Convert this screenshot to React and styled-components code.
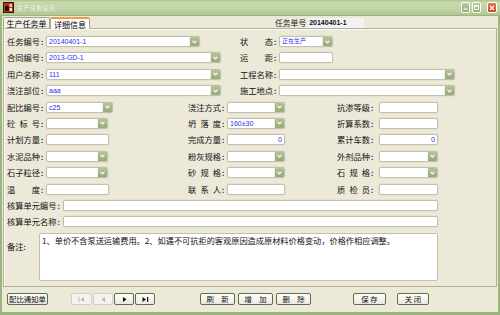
import React from 'react';
import styled, { createGlobalStyle } from 'styled-components';

const GlobalStyle = createGlobalStyle`
  html, body {
    margin: 0;
    padding: 0;
    background: #ffffff;
  }
  body {
    font-family: "Noto Sans CJK SC", "Noto Sans", sans-serif;
  }
`;

export default function App() {
  return (
    <>
      <GlobalStyle />
      <Window>
        <TitleBar>
          <AppIcon />
          <Title>生产任务设定</Title>
          <Controls>
            <CtrlButton>
              <svg width="5" height="5" viewBox="0 0 5 5">
                <rect x="0.5" y="3.5" width="4" height="1.2" fill="#fff" />
              </svg>
            </CtrlButton>
            <CtrlButton>
              <svg width="5" height="5" viewBox="0 0 5 5">
                <rect x="0.5" y="0.5" width="4" height="4" fill="none" stroke="#fff" strokeWidth="0.9" />
                <rect x="0.5" y="0.5" width="4" height="1.2" fill="#fff" />
              </svg>
            </CtrlButton>
            <CtrlButton $close>
              <svg width="6" height="6" viewBox="0 0 6 6">
                <path d="M1 1 L5 5 M5 1 L1 5" stroke="#fff" strokeWidth="1.4" />
              </svg>
            </CtrlButton>
          </Controls>
        </TitleBar>

        <Frame>
          <TabsRow>
            <Tab $w={47}>生产任务单</Tab>
            <Tab $w={40} $active>详细信息</Tab>
            <TaskNo>
              <TaskLabel>任务单号</TaskLabel>
              <TaskValue>20140401-1</TaskValue>
            </TaskNo>
          </TabsRow>

          <Panel>
            <TopGrid>
              <Label text="任务编号" />
              <Combo w={154} value="20140401-1" />
              <Label text="状 态" />
              <Combo w={54} value="正在生产" cjk />

              <Label text="合同编号" />
              <Combo w={175} value="2013-GD-1" />
              <Label text="运 距" />
              <TextBox w={54} />

              <Label text="用户名称" />
              <Combo w={175} value="111" />
              <Label text="工程名称" />
              <Combo w={176} />

              <Label text="浇注部位" />
              <Combo w={175} value="aaa" />
              <Label text="施工地点" />
              <Combo w={176} />
            </TopGrid>

            <MidGrid>
              <Label text="配比编号" />
              <Combo w={67} value="c25" />
              <Label text="浇注方式" />
              <Combo w={58} />
              <Label text="抗渗等级" />
              <TextBox w={59} />

              <Label text="砼 标 号" />
              <Combo w={62} />
              <Label text="坍 落 度" />
              <Combo w={58} value="160±30" />
              <Label text="折算系数" />
              <TextBox w={59} />

              <Label text="计划方量" />
              <TextBox w={63} />
              <Label text="完成方量" />
              <TextBox w={58} value="0" right />
              <Label text="累计车数" />
              <TextBox w={59} value="0" right />

              <Label text="水泥品种" />
              <Combo w={62} />
              <Label text="粉灰规格" />
              <Combo w={58} />
              <Label text="外剂品种" />
              <Combo w={59} />

              <Label text="石子粒径" />
              <Combo w={62} />
              <Label text="砂 规 格" />
              <Combo w={58} />
              <Label text="石 规 格" />
              <Combo w={59} />

              <Label text="温 度" />
              <TextBox w={63} />
              <Label text="联 系 人" />
              <TextBox w={58} />
              <Label text="质 检 员" />
              <TextBox w={59} />
            </MidGrid>

            <WideGrid>
              <Label text="核算单元编号" w={55} />
              <TextBox w={375} />
              <Label text="核算单元名称" w={55} />
              <TextBox w={375} />
            </WideGrid>

            <RemarkRow>
              <RemarkLabel>备注:</RemarkLabel>
              <RemarkBox>
                1、单价不含泵送运输费用。2、如遇不可抗拒的客观原因造成原材料价格变动，价格作相应调整。
              </RemarkBox>
            </RemarkRow>
          </Panel>

          <Footer>
            <Btn $w={41}>配比通知单</Btn>
            <Group $ml={23} $gap={1}>
              <NavBtn $w={21} disabled>
                <svg width="7" height="5" viewBox="0 0 7 5">
                  <rect x="0.5" y="0" width="1" height="5" fill="#b9b8ae" />
                  <path d="M6 0 L2.5 2.5 L6 5 Z" fill="#b9b8ae" />
                </svg>
              </NavBtn>
              <NavBtn $w={20} disabled>
                <svg width="5" height="5" viewBox="0 0 5 5">
                  <path d="M4 0 L0.5 2.5 L4 5 Z" fill="#b9b8ae" />
                </svg>
              </NavBtn>
              <NavBtn $w={20}>
                <svg width="5" height="5" viewBox="0 0 5 5">
                  <path d="M1 0 L4.5 2.5 L1 5 Z" fill="#111" />
                </svg>
              </NavBtn>
              <NavBtn $w={20}>
                <svg width="7" height="5" viewBox="0 0 7 5">
                  <path d="M0.5 0 L4 2.5 L0.5 5 Z" fill="#111" />
                  <rect x="5" y="0" width="1.2" height="5" fill="#111" />
                </svg>
              </NavBtn>
            </Group>
            <Group $ml={45} $gap={3}>
              <Btn $w={35}>刷　新</Btn>
              <Btn $w={35}>增　加</Btn>
              <Btn $w={35}>删　除</Btn>
            </Group>
            <Group $ml={42} $gap={11}>
              <Btn $w={33}>保 存</Btn>
              <Btn $w={32}>关 闭</Btn>
            </Group>
          </Footer>
        </Frame>
      </Window>
    </>
  );
}

function AppIcon() {
  return (
    <IconWrap>
      <svg width="11" height="11" viewBox="0 0 11 11">
        <rect x="0" y="0" width="11" height="11" fill="#2a1a12" />
        <rect x="1" y="1" width="9" height="9" fill="#c8321a" />
        <path d="M2 9 L2 5 L4 3 L6 5 L6 9 Z" fill="#1c120c" />
        <rect x="6.5" y="2" width="2.5" height="3" fill="#f2d27a" />
        <rect x="6.5" y="6" width="2.5" height="3" fill="#f6ecc8" />
      </svg>
    </IconWrap>
  );
}

function Label({ text, w = 39 }) {
  const chars = text.replace(/\s/g, '').split('');
  return (
    <LabelBox $w={w}>
      <Chars>
        {chars.map((c, i) => (
          <span key={i}>{c}</span>
        ))}
      </Chars>
      <Colon>:</Colon>
    </LabelBox>
  );
}

function Combo({ w, value, cjk }) {
  return (
    <Box $w={w}>
      <Value $cjk={cjk}>{value}</Value>
      <Arrow>
        <svg width="5" height="4" viewBox="0 0 5 4">
          <path d="M0.6 0.8 L2.5 2.8 L4.4 0.8" fill="none" stroke="#fff" strokeWidth="1.2" />
        </svg>
      </Arrow>
    </Box>
  );
}

function TextBox({ w, value, right }) {
  return (
    <Box $w={w}>
      <Value $right={right}>{value}</Value>
    </Box>
  );
}

const Window = styled.div`
  width: 500px;
  height: 315px;
  display: flex;
  flex-direction: column;
  overflow: hidden;
  background: #ece9d8;
`;

const TitleBar = styled.div`
  height: 16px;
  display: flex;
  align-items: center;
  padding: 0 3px;
  background: linear-gradient(#a9c187 0, #c8d9ae 2px, #c2d5a6 9px, #b0c791 100%);
  border-bottom: 1px solid #9cb57c;
  box-sizing: border-box;
`;

const IconWrap = styled.span`
  display: flex;
  width: 11px;
  height: 11px;
`;

const Title = styled.span`
  margin-left: 3px;
  font-size: 6.2px;
  color: #ffffff;
  text-shadow: 0 0 1px #8fa672;
  letter-spacing: 0.1px;
`;

const Controls = styled.div`
  margin-left: auto;
  display: flex;
  align-items: center;
  gap: 2px;
`;

const CtrlButton = styled.span`
  box-sizing: border-box;
  width: ${p => (p.$close ? 10 : 9)}px;
  height: 11px;
  margin-left: ${p => (p.$close ? 4 : 0)}px;
  display: flex;
  align-items: center;
  justify-content: center;
  border: 1px solid #ffffff;
  border-radius: 2px;
  background: ${p =>
    p.$close
      ? 'linear-gradient(#e77a58, #cf3d1d)'
      : 'linear-gradient(#b8c9a0, #95ab78)'};
`;

const Frame = styled.div`
  flex: 1;
  display: flex;
  flex-direction: column;
  border-left: 2px solid #9bb67a;
  border-right: 2px solid #9bb67a;
  border-bottom: 3px solid #9bb67a;
  background: #ece9d8;
`;

const TabsRow = styled.div`
  height: 12px;
  display: flex;
  align-items: flex-end;
  padding-left: 1px;
`;

const Tab = styled.div`
  box-sizing: border-box;
  width: ${p => p.$w}px;
  height: ${p => (p.$active ? 12 : 11)}px;
  display: flex;
  align-items: center;
  justify-content: center;
  font-size: 8px;
  color: #000;
  background: ${p => (p.$active ? '#fdfdfb' : '#f3f2ea')};
  border: 1px solid #a6a592;
  border-bottom: none;
  border-top: ${p => (p.$active ? '2px solid #e8a040' : '1px solid #a6a592')};
  border-radius: 2px 2px 0 0;
  margin-bottom: ${p => (p.$active ? -1 : 0)}px;
  position: relative;
  z-index: ${p => (p.$active ? 1 : 0)};
`;

const TaskNo = styled.div`
  align-self: flex-start;
  margin-top: 1px;
  margin-left: 185px;
  display: flex;
  align-items: center;
  gap: 1px;
`;

const TaskLabel = styled.span`
  font-size: 7.8px;
  color: #222;
`;

const TaskValue = styled.span`
  box-sizing: border-box;
  width: 57px;
  height: 10px;
  padding-left: 2px;
  background: #f2f2f2;
  font-family: "Liberation Sans", sans-serif;
  font-size: 7px;
  font-weight: bold;
  line-height: 10px;
  color: #111;
`;

const Panel = styled.div`
  box-sizing: border-box;
  height: 259px;
  margin: 0 1px;
  padding: 7px 3px 0 3px;
  border: 1px solid #b2b09c;
  box-shadow: inset 1px 1px 0 #fbfaf4;
  display: flex;
  flex-direction: column;
  gap: 5.4px;
`;

const TopGrid = styled.div`
  display: grid;
  grid-template-columns: 39px 194px 39px auto;
  grid-auto-rows: 11px;
  row-gap: 5.4px;
  align-items: center;
`;

const MidGrid = styled.div`
  display: grid;
  grid-template-columns: 39px 142px 39px 110px 42px auto;
  grid-auto-rows: 11px;
  row-gap: 5.4px;
  align-items: center;
`;

const WideGrid = styled.div`
  display: grid;
  grid-template-columns: 56px auto;
  grid-auto-rows: 11px;
  row-gap: 5.4px;
  align-items: center;
`;

const LabelBox = styled.div`
  width: ${p => p.$w}px;
  height: 11px;
  display: flex;
  align-items: center;
  font-size: 8.25px;
  line-height: 11px;
  color: #111;
  white-space: nowrap;
`;

const Chars = styled.span`
  flex: 1;
  display: flex;
  justify-content: space-between;
`;

const Colon = styled.span`
  width: 6px;
  padding-left: 1px;
  box-sizing: border-box;
`;

const Box = styled.div`
  box-sizing: border-box;
  width: ${p => p.$w}px;
  height: 11px;
  display: flex;
  align-items: stretch;
  background: #ffffff;
  border: 1px solid #c3c0ac;
  border-radius: 2px;
  box-shadow: 0 0 0 0.5px #dedbcb;
`;

const Value = styled.span`
  flex: 1;
  padding: 0 2px;
  font-family: "Liberation Sans", "Noto Sans CJK SC", sans-serif;
  font-size: ${p => (p.$cjk ? 6 : 7)}px;
  line-height: 9px;
  color: #2d2df2;
  text-align: ${p => (p.$right ? 'right' : 'left')};
  white-space: nowrap;
  overflow: hidden;
`;

const Arrow = styled.span`
  width: 9px;
  margin: 0;
  display: flex;
  align-items: center;
  justify-content: center;
  background: linear-gradient(#b3c29b, #97a97c);
  border-left: 1px solid #edf1e4;
  border-radius: 1px;
`;

const RemarkRow = styled.div`
  display: flex;
  align-items: flex-start;
`;

const RemarkLabel = styled.span`
  width: 32px;
  margin-top: 8px;
  font-size: 8.25px;
  line-height: 11px;
  color: #111;
`;

const RemarkBox = styled.div`
  box-sizing: border-box;
  width: 399px;
  height: 48px;
  padding: 1px 2px;
  background: #ffffff;
  border: 1px solid #c3c0ac;
  border-radius: 2px;
  font-size: 8.2px;
  line-height: 11px;
  color: #111;
  white-space: nowrap;
  overflow: hidden;
`;

const Footer = styled.div`
  flex: 1;
  display: flex;
  align-items: center;
  padding: 0 0 1px 5px;
`;

const Group = styled.div`
  display: flex;
  gap: ${p => p.$gap}px;
  margin-left: ${p => p.$ml}px;
`;

const Btn = styled.button`
  box-sizing: border-box;
  width: ${p => p.$w}px;
  height: 12px;
  padding: 0;
  display: flex;
  align-items: center;
  justify-content: center;
  font-family: "Noto Sans CJK SC", sans-serif;
  font-size: 7.4px;
  line-height: 10px;
  color: #111;
  white-space: pre;
  background: linear-gradient(#fdfdfa, #ebe9df);
  border: 1px solid #5d7049;
  border-radius: 2px;
`;

const NavBtn = styled.button`
  box-sizing: border-box;
  width: ${p => p.$w}px;
  height: 12px;
  padding: 0;
  display: flex;
  align-items: center;
  justify-content: center;
  background: ${p => (p.disabled ? '#f4f3ed' : 'linear-gradient(#fdfdfa, #ebe9df)')};
  border: 1px solid ${p => (p.disabled ? '#d2d0c4' : '#5d7049')};
  border-radius: 2px;
`;
